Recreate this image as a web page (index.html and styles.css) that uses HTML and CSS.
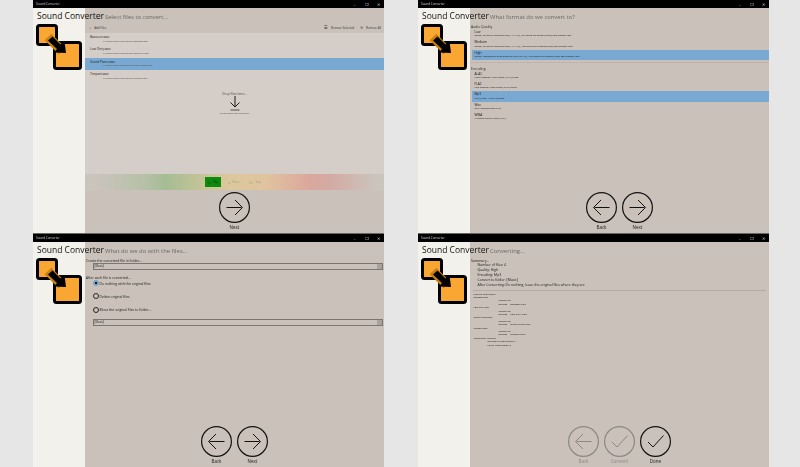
FILE: index.html
```html
<!Doctype html>
<html lang='en'>
<head>
    <meta charset='utf-8'>
    <title>Sound Converter</title>
    <link rel="stylesheet" href="styles.css">
</head>
<body>
    <svg class='defs' width='0' height='0'>
        <symbol id='logo' viewBox='0 0 48 48'>
            <rect x='2.5' y='2.5' width='19' height='19' rx='2' fill='#f9a632' stroke='#000' stroke-width='3'/>
            <rect x='19.5' y='19.5' width='26' height='26' rx='2' fill='#f9a632' stroke='#000' stroke-width='3'/>
            <path d='M13 14 L27 28' stroke='#c87f14' stroke-width='9.5'/>
            <path d='M17.5 13.5 L25.5 21.5 L29.5 18 L31 30 L19 29.5 L22 26 L13 17.5 Z' fill='#000'/>
        </symbol>
        <symbol id='next' viewBox='0 0 31 31'>
            <circle cx='15.5' cy='15.5' r='14.9' fill='none' stroke='currentColor' stroke-width='1.2'/>
            <path d='M7.5 15.5 H22.5 M16 8 L23.5 15.5 L16 23' fill='none' stroke='currentColor' stroke-width='1'/>
        </symbol>
        <symbol id='back' viewBox='0 0 31 31'>
            <circle cx='15.5' cy='15.5' r='14.9' fill='none' stroke='currentColor' stroke-width='1.2'/>
            <path d='M23.5 15.5 H8.5 M15 8 L7.5 15.5 L15 23' fill='none' stroke='currentColor' stroke-width='1'/>
        </symbol>
        <symbol id='check' viewBox='0 0 31 31'>
            <circle cx='15.5' cy='15.5' r='14.9' fill='none' stroke='currentColor' stroke-width='1.2'/>
            <path d='M8 16 L13 21 L23.5 9.5' fill='none' stroke='currentColor' stroke-width='1'/>
        </symbol>
    </svg>

    <div class='desktop'>
        <!-- step 1 -->
        <section class='window'>
            <div class='titlebar'>
                <span>Sound Converter</span>
                <div class='controls'><i>–</i><i>❐</i><i>✕</i></div>
            </div>
            <div class='win-body'>
                <div class='heading'><h1>Sound Converter</h1><h2>Select files to convert...</h2></div>
                <div class='columns'>
                    <div class='side'><svg class='logo'><use href='#logo'/></svg></div>
                    <div class='main'>
                        <div class='toolbar'>
                            <span class='tool'><b>+</b>Add Files</span>
                            <span class='tool push'><b>☰</b>Remove Selected</span>
                            <span class='tool'><b>✕</b>Remove All</span>
                        </div>
                        <div class='files'>
                            <ul class='file-list'>
                                <li><strong>Bassoon.wav</strong><span>C:\Users\Lew\Music\Other\Bassoon.wav</span></li>
                                <li><strong>Low Dirty.wav</strong><span>C:\Users\Lew\Music\Other\Low Dirty.wav</span></li>
                                <li class='selected'><strong>Grand Piano.wav</strong><span>C:\Users\Lew\Music\Other\Grand Piano.wav</span></li>
                                <li><strong>Timpani.wav</strong><span>C:\Users\Lew\Music\Other\Timpani.wav</span></li>
                            </ul>
                            <div class='drop'>
                                <p>Drop files here...</p>
                                <svg width='12' height='15' viewBox='0 0 12 15'>
                                    <path d='M6 0 V11 M1.5 6.5 L6 11 L10.5 6.5' fill='none' stroke='#1c1a18' stroke-width='1'/>
                                    <path d='M1.5 14 H10.5' stroke='#55504c' stroke-width='1'/>
                                </svg>
                                <small>Or anywhere on this page!</small>
                            </div>
                        </div>
                        <div class='transport'>
                            <span class='play'><b>▷</b>Play</span>
                            <span class='dim'><b>॥</b>Pause</span>
                            <span class='dim'><b>☐</b>Stop</span>
                        </div>
                        <div class='nav'>
                            <div class='nav-btn'><svg><use href='#next'/></svg>Next</div>
                        </div>
                    </div>
                </div>
            </div>
        </section>

        <!-- step 2 -->
        <section class='window'>
            <div class='titlebar'>
                <span>Sound Converter</span>
                <div class='controls'><i>–</i><i>❐</i><i>✕</i></div>
            </div>
            <div class='win-body'>
                <div class='heading'><h1>Sound Converter</h1><h2>What format do we convert to?</h2></div>
                <div class='columns'>
                    <div class='side'><svg class='logo'><use href='#logo'/></svg></div>
                    <div class='main'>
                        <div class='formats'>
                            <h3>Audio Quality</h3>
                            <ul class='opts'>
                                <li><strong>Low</strong><span>Stereo, CD quality sampling rate (44.1 KHz), 96 kilobits per second (kbps) data transfer rate.</span></li>
                                <li><strong>Medium</strong><span>Stereo, CD quality sampling rate (44.1 KHz), 128 kilobits per second (kbps) data transfer rate.</span></li>
                                <li class='selected'><strong>High</strong><span>Stereo, Professional audio sampling rate (48 KHz), 192 kilobits per second (kbps) data transfer rate.</span></li>
                            </ul>
                            <hr>
                            <h3>Encoding</h3>
                            <ul class='opts'>
                                <li><strong>ALAC</strong><span>Apple Lossless Audio Codec (ALAC) audio.</span></li>
                                <li><strong>FLAC</strong><span>Free Lossless Audio Codec (FLAC) audio.</span></li>
                                <li class='selected'><strong>Mp3</strong><span>MP3 (MPEG-1 layer 3) audio.</span></li>
                                <li><strong>Wav</strong><span>RIFF uncompressed PCM.</span></li>
                                <li><strong>WMA</strong><span>Windows Media Audio (WMA).</span></li>
                            </ul>
                        </div>
                        <div class='nav'>
                            <div class='nav-btn'><svg><use href='#back'/></svg>Back</div>
                            <div class='nav-btn'><svg><use href='#next'/></svg>Next</div>
                        </div>
                    </div>
                </div>
            </div>
        </section>

        <!-- step 3 -->
        <section class='window'>
            <div class='titlebar'>
                <span>Sound Converter</span>
                <div class='controls'><i>–</i><i>❐</i><i>✕</i></div>
            </div>
            <div class='win-body'>
                <div class='heading'><h1>Sound Converter</h1><h2>What do we do with the files...</h2></div>
                <div class='columns'>
                    <div class='side'><svg class='logo'><use href='#logo'/></svg></div>
                    <div class='main'>
                        <div class='actions'>
                            <p>Create the converted file in folder...</p>
                            <div class='folder'><span>[Music]</span><b></b></div>
                            <p class='after'>After each file is converted...</p>
                            <div class='radio on'>Do nothing with the original files</div>
                            <div class='radio'>Delete original files</div>
                            <div class='radio'>Move the original files to folder...</div>
                            <div class='folder tight'><span>[Music]</span><b></b></div>
                        </div>
                        <div class='nav'>
                            <div class='nav-btn'><svg><use href='#back'/></svg>Back</div>
                            <div class='nav-btn'><svg><use href='#next'/></svg>Next</div>
                        </div>
                    </div>
                </div>
            </div>
        </section>

        <!-- step 4 -->
        <section class='window'>
            <div class='titlebar'>
                <span>Sound Converter</span>
                <div class='controls'><i>–</i><i>❐</i><i>✕</i></div>
            </div>
            <div class='win-body'>
                <div class='heading'><h1>Sound Converter</h1><h2>Converting...</h2></div>
                <div class='columns'>
                    <div class='side'><svg class='logo'><use href='#logo'/></svg></div>
                    <div class='main'>
                        <div class='summary'>
                            <p>Summary...</p>
                            <ul>
                                <li>Number of files: 4</li>
                                <li>Quality: High</li>
                                <li>Encoding: Mp3</li>
                                <li>Convert to folder: [Music]</li>
                                <li>After Converting: Do nothing, leave the original files where they are</li>
                            </ul>
                            <hr>
                            <div class='log'>
                                <p>Starting Conversion</p>
                                <p>Bassoon.wav</p>
                                <p class='in2'>Converting</p>
                                <p class='in2'>Success -- 'Bassoon.Mp3'</p>
                                <p>Low Dirty.wav</p>
                                <p class='in2'>Converting</p>
                                <p class='in2'>Success -- 'Low Dirty.Mp3'</p>
                                <p>Grand Piano.wav</p>
                                <p class='in2'>Converting</p>
                                <p class='in2'>Success -- 'Grand Piano.Mp3'</p>
                                <p>Timpani.wav</p>
                                <p class='in2'>Converting</p>
                                <p class='in2'>Success -- 'Timpani.Mp3'</p>
                                <p>Conversion Finished</p>
                                <p class='in1'>Successfull conversions: 4</p>
                                <p class='in1'>Failed Conversions: 0</p>
                            </div>
                        </div>
                        <div class='nav'>
                            <div class='nav-btn off'><svg><use href='#back'/></svg>Back</div>
                            <div class='nav-btn off'><svg><use href='#check'/></svg>Convert!</div>
                            <div class='nav-btn'><svg><use href='#check'/></svg>Done</div>
                        </div>
                    </div>
                </div>
            </div>
        </section>
    </div>
</body>
</html>
```

FILE: styles.css
```css
html,
body {
    margin: 0;
    height: 100%;
    overflow: hidden;
    background-color: #e6e6e6;
    font-family: "Open Sans", "Liberation Sans", sans-serif;
    color: #1c1a18;
}

.defs {
    position: absolute;
}

.desktop {
    display: grid;
    grid-template-columns: 351px 351px;
    grid-template-rows: 233px 233px;
    column-gap: 34px;
    row-gap: 1px;
    padding-left: 33px;
    filter: blur(0.25px);
}

.window {
    display: flex;
    flex-direction: column;
    box-shadow: 0 1px 0 #6a6764;
}

.titlebar {
    display: flex;
    align-items: center;
    justify-content: space-between;
    height: 8px;
    padding: 0 3px 0 3px;
    background-color: #000;
    color: #ddd;
    font-size: 3px;
}

.controls {
    display: flex;
    gap: 7px;
}

.controls i {
    width: 5px;
    font-style: normal;
    font-size: 3.5px;
    text-align: center;
}

/* sidebar colour runs up behind the heading */
.win-body {
    flex: 1;
    display: flex;
    flex-direction: column;
    background: linear-gradient(90deg, #f3f1ec 52px, #c9c1ba 52px);
}

.heading {
    display: flex;
    align-items: baseline;
    gap: 1px;
    height: 14px;
    padding-left: 4px;
    line-height: 15px;
}

h1 {
    margin: 0;
    font-size: 8.5px;
    font-weight: 400;
    color: #141210;
}

h2 {
    margin: 0;
    font-size: 5.9px;
    font-weight: 400;
    color: #6c6864;
}

.columns {
    flex: 1;
    display: flex;
    min-height: 0;
}

.side {
    width: 52px;
    flex: none;
}

.logo {
    display: block;
    width: 48px;
    height: 48px;
    margin: 1px 0 0 2px;
}

.main {
    flex: 1;
    display: flex;
    flex-direction: column;
    min-width: 0;
}

.nav {
    display: flex;
    justify-content: center;
    gap: 5px;
    height: 43px;
    flex: none;
    padding-top: 1.5px;
    box-sizing: border-box;
}

.nav-btn {
    display: flex;
    flex-direction: column;
    align-items: center;
    width: 31px;
    font-size: 4.5px;
    line-height: 8px;
    color: #1c1a18;
}

.nav-btn svg {
    width: 31px;
    height: 31px;
    flex: none;
    color: #141210;
}

.nav-btn.off,
.nav-btn.off svg {
    color: #8d8884;
}

/* step 1 */
.toolbar {
    display: flex;
    align-items: center;
    gap: 6px;
    height: 11px;
    padding: 0 3px 0 4px;
    font-size: 2.9px;
    color: #33302d;
}

.tool b {
    margin-right: 3px;
    font-size: 4px;
    font-weight: 400;
}

.push {
    margin-left: auto;
}

.files {
    flex: 1;
    display: flex;
    flex-direction: column;
    background-color: #d5cec8;
}

.file-list {
    list-style-type: none;
    margin: 0;
    padding: 0;
}

.file-list li {
    height: 12.4px;
    padding: 2px 0 0 5px;
    box-sizing: border-box;
    font-size: 3.2px;
    line-height: 4.5px;
}

.file-list strong {
    display: block;
    font-weight: 400;
}

.file-list span {
    display: block;
    padding-left: 13px;
    font-size: 2.4px;
    line-height: 3.5px;
    color: #4a4643;
}

.selected {
    background-color: #79a9d2;
}

.drop {
    display: flex;
    flex-direction: column;
    align-items: center;
    margin-top: 9.5px;
    color: #4a4643;
}

.drop p {
    margin: 0;
    font-size: 3.2px;
    line-height: 4px;
}

.drop svg {
    display: block;
}

.drop small {
    font-size: 2.4px;
    line-height: 4px;
}

.transport {
    display: flex;
    align-items: center;
    justify-content: center;
    gap: 4px;
    height: 16px;
    flex: none;
    font-size: 2.6px;
    background: linear-gradient(90deg, #cbc4bd 3%, #b7c0a8 20%, #a6bc95 27%, #bcc296 36%, #dcc89c 48%, #e0c49f 60%, #dba79d 75%, #d3aaa3 82%, #cbc4bd 97%);
}

.transport span {
    display: flex;
    align-items: center;
    gap: 2px;
    height: 10.5px;
    padding: 0 3px;
}

.transport b {
    font-size: 3.5px;
    font-weight: 400;
}

.play {
    background-color: #0b8a0b;
    color: #123;
}

.dim {
    color: #a39d8e;
}

/* step 2 */
.formats {
    flex: 1;
    padding-top: 2px;
}

.formats h3 {
    margin: 0 0 0 1px;
    font-size: 3.4px;
    font-weight: 400;
    line-height: 5px;
    color: #33302d;
}

.formats hr {
    height: 1px;
    margin: 2px 0 3px;
    border: 0;
    background-color: #bdb5ae;
}

.opts {
    list-style-type: none;
    margin: 0;
    padding: 0;
}

.opts li {
    height: 10.3px;
    margin-left: 1.5px;
    padding-left: 3px;
    padding-top: 1px;
    box-sizing: border-box;
    font-size: 3.2px;
    line-height: 4.2px;
}

.opts strong {
    display: block;
    font-weight: 400;
}

.opts span {
    display: block;
    font-size: 2.3px;
    line-height: 3.6px;
    color: #1c1a18;
}

/* step 3 */
.actions {
    flex: 1;
    padding-top: 2.5px;
    font-size: 3.4px;
}

.actions p {
    margin: 0 0 0 1px;
    line-height: 4px;
}

.actions .after {
    margin-top: 6px;
}

.folder {
    display: flex;
    height: 7px;
    margin: 0 1px 0 7.5px;
    box-sizing: border-box;
    border: 1px solid #7b7672;
    font-size: 2.8px;
    line-height: 5px;
}

.folder.tight {
    margin-top: -0.5px;
}

.folder span {
    flex: 1;
    padding-left: 1px;
}

.folder b {
    width: 5px;
    background-color: #aaa39d;
}

.radio {
    position: relative;
    height: 13.3px;
    padding-left: 14.5px;
    font-size: 3.4px;
    line-height: 7px;
}

/* the round mark sits over the row's left padding */
.radio::before {
    content: '';
    position: absolute;
    left: 7.5px;
    top: 0.5px;
    width: 4px;
    height: 4px;
    border: 1px solid #2b2826;
    border-radius: 50%;
}

.radio.on::before {
    background: radial-gradient(circle, #1c1a18 35%, #7ba6cc 45%);
    border-color: #6f9cc4;
}

/* step 4 */
.summary {
    flex: 1;
    padding-top: 2.5px;
    font-size: 3.45px;
    line-height: 4.85px;
}

.summary > p {
    margin: 0 0 0 1px;
}

.summary ul {
    list-style-type: none;
    margin: 0;
    padding: 0 0 0 7.5px;
}

.summary hr {
    height: 1px;
    margin: 2px 3px 2px 3px;
    border: 0;
    background-color: #b3aba4;
}

.log {
    padding-left: 3.5px;
    font-size: 2.4px;
    line-height: 3.4px;
    color: #1c1a18;
}

.log p {
    margin: 0;
}

.log .in1 {
    padding-left: 14px;
}

.log .in2 {
    padding-left: 25px;
}
```
